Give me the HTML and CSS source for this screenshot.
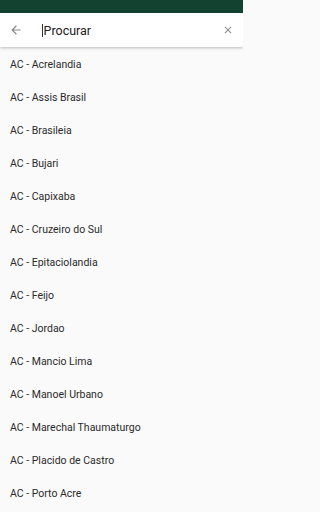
FILE: index.html
```html
<!DOCTYPE html>
<html>
<head>
<meta charset="utf-8">
<link rel="stylesheet" href="styles.css">
</head>
<body>
<div class="page">
<div class="status"></div>
<div class="search">
  <svg class="back" width="14" height="14" viewBox="0 0 24 24"><path d="M20 11H7.83l5.59-5.59L12 4l-8 8 8 8 1.41-1.41L7.83 13H20v-2z" fill="#8a8a8a"/></svg>
  <div class="field"><span class="caret"></span>Procurar</div>
  <svg class="clear" width="12" height="12" viewBox="0 0 24 24"><path d="M19 6.41L17.59 5 12 10.59 6.41 5 5 6.41 10.59 12 5 17.59 6.41 19 12 13.41 17.59 19 19 17.59 13.41 12z" fill="#8a8a8a"/></svg>
</div>
<ul class="list">
  <li>AC - Acrelandia</li>
  <li>AC - Assis Brasil</li>
  <li>AC - Brasileia</li>
  <li>AC - Bujari</li>
  <li>AC - Capixaba</li>
  <li>AC - Cruzeiro do Sul</li>
  <li>AC - Epitaciolandia</li>
  <li>AC - Feijo</li>
  <li>AC - Jordao</li>
  <li>AC - Mancio Lima</li>
  <li>AC - Manoel Urbano</li>
  <li>AC - Marechal Thaumaturgo</li>
  <li>AC - Placido de Castro</li>
  <li>AC - Porto Acre</li>
</ul>
</div>
</body>
</html>
```
FILE: styles.css
```css
html, body {
  margin: 0;
  padding: 0;
  background: #fafafa;
  font-family: Roboto, "Liberation Sans", sans-serif;
  overflow: hidden;
}
.page {
  width: 243px;
  height: 512px;
  overflow: hidden;
  background: #fafafa;
}
.status {
  height: 13px;
  background: #134330;
}
.search {
  position: relative;
  z-index: 1;
  height: 34px;
  background: #ffffff;
  display: flex;
  align-items: center;
  box-shadow: 0 1px 3px rgba(0,0,0,0.25);
}
.back {
  margin-left: 9px;
  width: 14px;
  height: 14px;
}
.field {
  margin-left: 19px;
  flex: 1;
  display: flex;
  align-items: center;
  font-size: 12.5px;
  color: #222222;
  padding-top: 1px;
}
.caret {
  display: inline-block;
  width: 1px;
  height: 13px;
  background: #333;
  margin-right: 0.5px;
}
.clear {
  margin-right: 9px;
  width: 12px;
  height: 12px;
}
.list {
  list-style: none;
  margin: 0;
  padding: 1px 0 0 0;
}
.list li {
  height: 33px;
  line-height: 33px;
  padding-left: 10px;
  font-size: 10.5px;
  color: #2a2a2a;
}
```
